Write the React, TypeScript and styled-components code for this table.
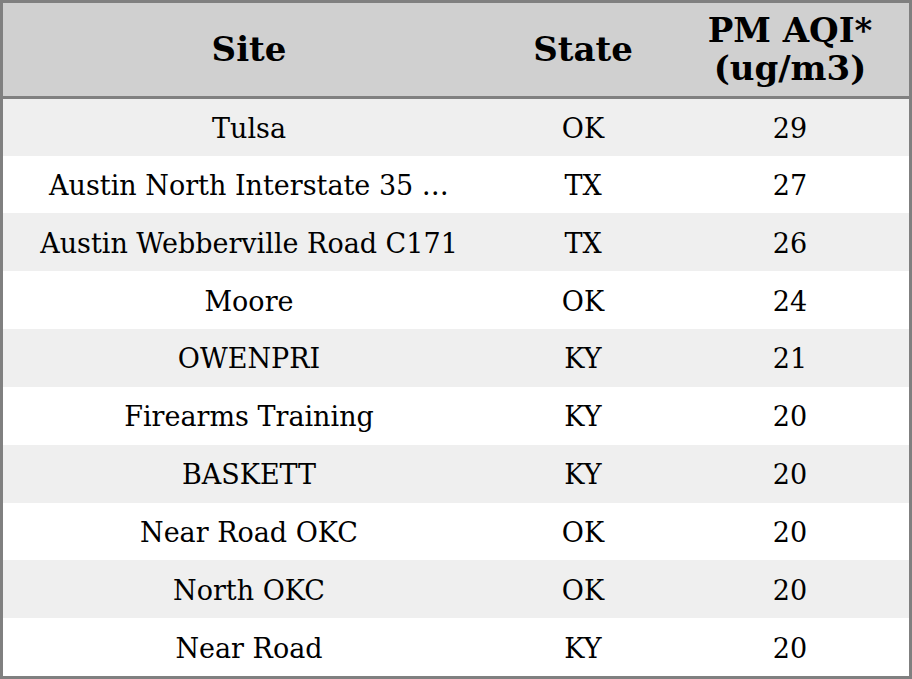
import React from "react";
import styled, { createGlobalStyle } from "styled-components";

const Global = createGlobalStyle`
  html, body { margin: 0; padding: 0; background: #ffffff; }
  body { font-family: "DejaVu Serif", serif; }
`;

const Frame = styled.div`
  width: 912px;
  height: 679px;
  box-sizing: border-box;
  border: 3px solid #808080;
  display: flex;
  flex-direction: column;
  overflow: hidden;
`;

const Header = styled.div`
  display: grid;
  grid-template-columns: 492px 176px 1fr;
  height: 93px;
  background: #d0d0d0;
  border-bottom: 3px solid #808080;
  box-sizing: content-box;
`;

const HeadCell = styled.div`
  display: flex;
  align-items: center;
  justify-content: center;
  text-align: center;
  font-family: "DejaVu Serif", serif;
  font-weight: bold;
  font-size: 34px;
  line-height: 38px;
  color: #000;
`;

const Row = styled.div<{ $alt: boolean; $first: boolean }>`
  display: grid;
  grid-template-columns: 492px 176px 1fr;
  height: ${(p) => (p.$first ? 57 : 58)}px;
  background: ${(p) => (p.$alt ? "#efefef" : "#ffffff")};
`;

const Cell = styled.div`
  display: flex;
  align-items: center;
  justify-content: center;
  padding-top: 2px;
  font-family: "DejaVu Serif", serif;
  font-size: 27px;
  color: #000;
  white-space: nowrap;
`;

const rows = [
  ["Tulsa", "OK", "29"],
  ["Austin North Interstate 35 …", "TX", "27"],
  ["Austin Webberville Road C171", "TX", "26"],
  ["Moore", "OK", "24"],
  ["OWENPRI", "KY", "21"],
  ["Firearms Training", "KY", "20"],
  ["BASKETT", "KY", "20"],
  ["Near Road OKC", "OK", "20"],
  ["North OKC", "OK", "20"],
  ["Near Road", "KY", "20"],
];

export default function App() {
  return (
    <>
      <Global />
      <Frame>
        <Header>
          <HeadCell>Site</HeadCell>
          <HeadCell>State</HeadCell>
          <HeadCell>
            PM AQI*
            <br />
            (ug/m3)
          </HeadCell>
        </Header>
        {rows.map((r, i) => (
          <Row key={i} $alt={i % 2 === 0} $first={i === 0}>
            <Cell>{r[0]}</Cell>
            <Cell>{r[1]}</Cell>
            <Cell>{r[2]}</Cell>
          </Row>
        ))}
      </Frame>
    </>
  );
}
